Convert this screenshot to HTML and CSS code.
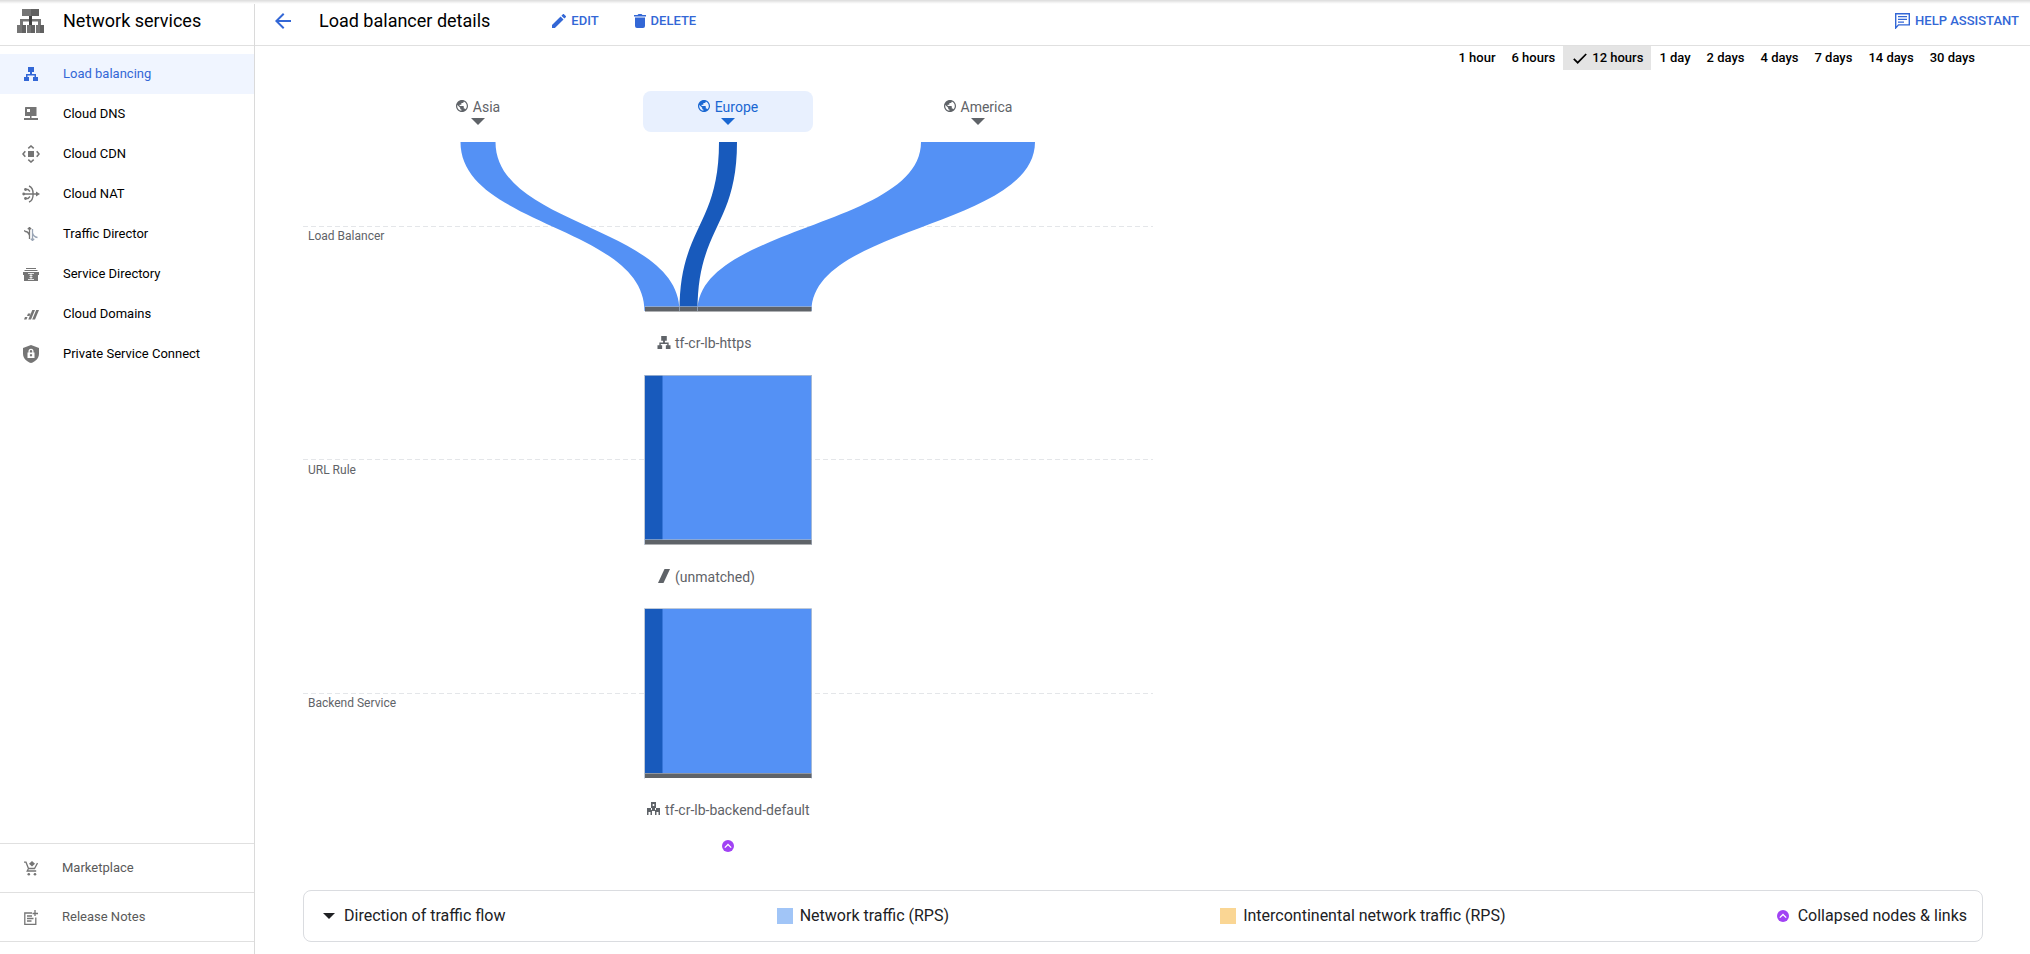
FILE: index.html
```
<!DOCTYPE html>
<html lang="en">
<head>
<meta charset="utf-8">
<title>Load balancer details</title>
<link rel="stylesheet" href="styles.css">
</head>
<body>
<svg class="defs" aria-hidden="true">
  <symbol id="i-lb" viewBox="0 0 14 14"><path d="M4 0h6v5H8v2h4v3h2v4H9v-4h1.500V8.500h-7V10H5v4H0v-4h2V7h4V5H4z"/></symbol>
  <symbol id="i-globe" viewBox="2 2 20 20"><path d="M12 2C6.480 2 2 6.480 2 12s4.480 10 10 10 10-4.480 10-10S17.520 2 12 2zm-1 17.930c-3.950-.49-7-3.850-7-7.930 0-.62.080-1.210.21-1.790L9 15v1c0 1.100.9 2 2 2v1.930zm6.900-2.540c-.26-.81-1-1.390-1.900-1.390h-1v-3c0-.55-.45-1-1-1H8v-2h2c.55 0 1-.45 1-1V7h2c1.100 0 2-.9 2-2v-.41c2.930 1.190 5 4.060 5 7.410 0 2.080-.8 3.970-2.100 5.390z"/></symbol>
  <symbol id="i-collapsed" viewBox="0 0 12 12"><circle cx="6" cy="6" r="6" fill="#a142f4"/><path d="M2.800 7.600 6 4.500l3.200 3.100" fill="none" stroke="#fff" stroke-width="1.300"/></symbol>
</svg>
<div class="app">
  <aside class="side">
    <div class="side-head">
      <svg width="27" height="24" viewBox="0 0 27 24"><path fill="#757575" d="M5 0h9v7H5zM3 10h21v2.500H3zM3 12h3v4H3zM21 12h3v4h-3zM0 16h5v8H0zM10 16h4v8h-4zM19 16h4v8h-4z"/><path fill="#616161" d="M14 0h8v7h-8zM5 16h4v8H5zM14 16h4v8h-4zM23 16h4v8h-4z"/><path fill="#424242" d="M12 7h3v9h-3z"/></svg>
      <span class="side-title">Network services</span>
    </div>
    <nav class="nav">
      <a href="#" class="nav-item current"><span class="ico"><svg width="14" height="14"><use href="#i-lb"/></svg></span>Load balancing</a>
      <a href="#" class="nav-item"><span class="ico"><svg width="14" height="14" viewBox="0 0 14 14"><path fill-rule="evenodd" d="M1.500 0h11v9h-5v2H14v2H0v-2h6V9H1V.5zM3 2v3h3V2z"/></svg></span>Cloud DNS</a>
      <a href="#" class="nav-item"><span class="ico"><svg width="18" height="18" viewBox="0 0 18 18"><path d="M6 6h6v6H6z"/><path d="M6.300 3.300 9 1l2.700 2.300M6.300 14.700 9 17l2.700-2.300M3.300 6.300 1 9l2.300 2.700M14.700 6.300 17 9l-2.300 2.700" fill="none" stroke="currentColor" stroke-width="1.600"/></svg></span>Cloud CDN</a>
      <a href="#" class="nav-item"><span class="ico"><svg width="18" height="18" viewBox="0 0 18 18"><path d="M7 1c5.500 2 5.500 14 0 16M1 9h15M3 4.500h3l2 2M3 13.500h3l2-2" fill="none" stroke="currentColor" stroke-width="1.400"/><circle cx="3.500" cy="4.500" r="1.400"/><circle cx="1.700" cy="9" r="1.400"/><circle cx="3.500" cy="13.500" r="1.400"/><path d="m14 6.500 4 2.500-4 2.500z"/></svg></span>Cloud NAT</a>
      <a href="#" class="nav-item"><span class="ico"><svg class="line" width="14" height="14" viewBox="0 0 14 14"><path d="M5.500 12V1M3.800 2.200 5.500.5l1.700 1.700M0 3.500l1.500 1c2 0 3 1 4 4" stroke="#757575"/><path d="M8.500 2v11M6.800 11.800l1.700 1.700 1.700-1.700M8.500 6c.7 3 2 4 5 4.500" stroke="#9aa5b5"/></svg></span>Traffic Director</a>
      <a href="#" class="nav-item"><span class="ico"><svg width="16" height="13" viewBox="0 0 16 13"><path d="M3 0h10v1H3zM1.500 2h13v1H1.500zM0 4h16v3h-1v6H1V7H0z"/><path d="M5 5.500h6M6.500 7.500h3M8 5v6M6.500 9.500h3M5 11.500h6" stroke="#fff" stroke-width=".8"/></svg></span>Service Directory</a>
      <a href="#" class="nav-item"><span class="ico"><svg width="15" height="11" viewBox="0 0 15 11"><path d="M8.300 1H11L7 10.500H4.300zM12.200 1H15l-4 9.500H8.200zM4 4.500h2.500l-1 2.500H3zM1 8h2.500l-1 2.500H0z"/></svg></span>Cloud Domains</a>
      <a href="#" class="nav-item"><span class="ico"><svg width="16" height="18" viewBox="0 0 16 18"><path d="m8 0 8 3v5.500c0 4.500-3.300 8.200-8 9.500-4.700-1.300-8-5-8-9.500V3z"/><path fill="#fff" fill-rule="evenodd" d="M4.500 7.500h1V6.200a2.500 2.500 0 0 1 5 0v1.300h1V13h-7zm2.300 0h2.400V6.200a1.200 1.200 0 0 0-2.400 0zM8 9a1.200 1.200 0 1 0 .01 0z"/></svg></span>Private Service Connect</a>
    </nav>
    <div class="side-foot">
      <a href="#" class="foot-item"><span class="ico"><svg width="14" height="15" viewBox="0 0 14 15"><path d="M0 1.200h2l2.500 6.300h6L13.500 2M4.500 7.500 3.200 10h9" fill="none" stroke="currentColor" stroke-width="1.300"/><path d="M8 0l3 2.700L8 5.500 5 2.700z"/><circle cx="4.800" cy="13.200" r="1.300"/><circle cx="11" cy="13.200" r="1.300"/></svg></span>Marketplace</a>
      <a href="#" class="foot-item"><span class="ico"><svg class="line" width="14" height="15" viewBox="0 0 14 15" stroke="currentColor"><path d="M8 3H.8v11.300h11V7.500M3 6h5M3 8.500h6.500M3 11h4.500M11 0v6M8.500 3.500H14"/></svg></span>Release Notes</a>
      <div class="foot-end"></div>
    </div>
  </aside>
  <main class="main">
    <header class="bar">
      <button class="back" aria-label="Back"><svg width="16" height="16" viewBox="4 4 16 16"><path d="M20 11H7.830l5.590-5.590L12 4l-8 8 8 8 1.410-1.410L7.830 13H20v-2z"/></svg></button>
      <h1>Load balancer details</h1>
      <button class="act"><svg width="14" height="14" viewBox="3 3 18 18"><path d="M3 17.250V21h3.750L17.810 9.940l-3.750-3.750L3 17.250zM20.710 7.040c.39-.39.39-1.020 0-1.410l-2.340-2.340c-.39-.39-1.020-.39-1.410 0l-1.830 1.830 3.750 3.750 1.830-1.830z"/></svg>EDIT</button>
      <button class="act del"><svg width="12" height="14" viewBox="0 0 12 14"><path d="M1 3.500h10V12q0 2-2 2H3q-2 0-2-2zM0 1h3.500l1-1h3l1 1H12v1.500H0z"/></svg>DELETE</button>
      <button class="act help"><svg width="15" height="16" viewBox="0 0 15 16"><path d="M.7 15V.7h13.600v11.200H3.500z" fill="none" stroke="currentColor" stroke-width="1.400"/><path d="M3 3h9v1.300H3zM3 5.700h9V7H3zM3 8.400h6v1.300H3z"/></svg>HELP ASSISTANT</button>
    </header>
    <div class="ranges">
      <button>1 hour</button><button>6 hours</button><button class="on"><svg width="14" height="11" viewBox="0 0 14 11"><path d="m.8 5.800 3.900 3.900L13.200 1" fill="none" stroke="currentColor" stroke-width="1.700"/></svg>12 hours</button><button>1 day</button><button>2 days</button><button>4 days</button><button>7 days</button><button>14 days</button><button>30 days</button>
    </div>
    <section class="flow">
      <svg class="sankey" width="850" height="820" viewBox="303 70 850 820">
        <path class="guide" d="M303 226.500h850M303 459.500h850M303 693.500h850"/>
        <g class="link">
          <path d="M460.500 142C460.500 226.500 644.500 226.500 644.500 311H679.500C679.500 226.500 495.500 226.500 495.500 142z"/>
          <path d="M921 142C921 226.500 697.500 226.500 697.500 311H811.500C811.500 226.500 1035 226.500 1035 142z"/>
          <path d="M645 375.500h166.500V540H645zM645 609h166.500v164H645z"/>
        </g>
        <g class="link-on">
          <path d="M719 142C719 226.500 679.500 226.500 679.500 311H697.500C697.500 226.500 737 226.500 737 142z"/>
          <path d="M645 375.500h17.500V540H645zM645 609h17.500v164H645z"/>
        </g>
        <path class="edge" d="M644.500 306.500h167M644.500 539.500h167M644.500 773.500h167M644.500 375v170M811.500 375v170M644.500 608.500v170M811.500 608.500v170M644.500 375.500h167M644.500 608.500h167"/>
        <path class="node" d="M645 307h166.500v4.500H645zM645 540h166.500v4.500H645zM645 773.500h166.500v4.500H645z"/>
        <path class="edge" d="M679.500 307v4M697.500 307v4"/>
        <g class="tier"><text x="308" y="240">Load Balancer</text><text x="308" y="474">URL Rule</text><text x="308" y="707">Backend Service</text></g>
        <g class="label">
          <use href="#i-lb" x="657" y="336" width="14" height="13"/><text x="675" y="348">tf-cr-lb-https</text>
          <path d="M664.500 569h5.500l-6.500 14H658z"/><text x="675" y="582">(unmatched)</text>
          <path fill-rule="evenodd" d="M651 802h5v6h-1v2h1v-2h4v7h-1.500v-3h-2v3H655v-4h-3v4h-1.500v-3h-2v3H647v-7h4v2h1v-2h-1zM652.700 804v2h1.600v-2z"/><text x="665" y="815">tf-cr-lb-backend-default</text>
        </g>
        <use href="#i-collapsed" x="722" y="840" width="12" height="12"/>
      </svg>
      <button class="region asia"><span><svg width="12" height="12"><use href="#i-globe"/></svg>Asia</span><i></i></button>
      <button class="region europe"><span><svg width="12" height="12"><use href="#i-globe"/></svg>Europe</span><i></i></button>
      <button class="region america"><span><svg width="12" height="12"><use href="#i-globe"/></svg>America</span><i></i></button>
    </section>
    <div class="legend">
      <span><i class="tri"></i>Direction of traffic flow</span>
      <span><i class="sw blue"></i>Network traffic (RPS)</span>
      <span><i class="sw amber"></i>Intercontinental network traffic (RPS)</span>
      <span class="nodes"><svg width="12" height="12"><use href="#i-collapsed"/></svg>Collapsed nodes &amp; links</span>
    </div>
  </main>
</div>
</body>
</html>
```
FILE: styles.css
```
* { box-sizing: border-box; }
body { margin: 0; font: 13px/20px Roboto, "Liberation Sans", sans-serif; color: #000; background: #fff; }
button { font: inherit; color: inherit; background: none; border: 0; padding: 0; margin: 0; cursor: pointer; }
a { color: inherit; text-decoration: none; }
svg { display: block; flex: none; fill: currentColor; }
.line { fill: none; stroke-width: 1.3; }
.defs { position: absolute; width: 0; height: 0; }
.app { display: flex; min-height: 100vh; }
.app::before { content: ""; position: absolute; top: 0; left: 0; right: 0; height: 4px; background: linear-gradient(#dcdcdc, #e4e4e4 25%, #f8f8f8 75%, #fff); }

.side { flex: none; width: 255px; border-right: 1px solid #dadada; display: flex; flex-direction: column; }
.side-head { height: 46px; border-bottom: 1px solid #e0e0e0; display: flex; align-items: center; gap: 19px; padding: 0 0 3px 17px; }
.side-title { font-size: 18px; line-height: 24px; }
.nav { padding-top: 8px; }
.nav-item { display: flex; align-items: center; height: 40px; }
.ico { width: 62px; display: flex; justify-content: center; color: #757575; }
.nav-item .ico { margin-right: 1px; }
.current { background: #f0f5ff; color: #3367d6; }
.current .ico { color: #3367d6; }
.side-foot { margin-top: auto; color: #5a5a5a; }
.foot-item { display: flex; align-items: center; height: 49px; border-top: 1px solid #e0e0e0; }
.foot-end { height: 13px; border-top: 1px solid #e0e0e0; }

.main { flex: 1; min-width: 0; display: flex; flex-direction: column; }
.bar { height: 46px; border-bottom: 1px solid #e0e0e0; display: flex; align-items: center; padding: 0 11px 3px 20px; color: #3367d6; }
h1 { margin: 0 62px 0 28px; font-size: 18px; line-height: 24px; font-weight: 400; color: #000; }
.act { display: flex; align-items: center; gap: 5px; font-weight: 500; }
.del { margin-left: 35px; }
.help { margin-left: auto; }
.ranges { display: flex; justify-content: flex-end; padding-right: 47px; }
.ranges button { height: 24px; padding: 0 8px; font-weight: 500; display: flex; align-items: center; gap: 5px; }
.ranges .on { background: #e4e4e4; padding-left: 10px; }

.flow { position: relative; margin-left: 48px; }
.sankey { overflow: visible; }
.guide { fill: none; stroke: #e4e6e9; stroke-dasharray: 5 3; }
.link { fill: #5491f5; }
.link-on { fill: #185abc; }
.node { fill: #5f6368; }
.edge { fill: none; stroke: #a3b2c8; stroke-opacity: .7; }
.tier { font-size: 12px; fill: #5f6368; }
.label { font-size: 14px; fill: #5f6368; }
.region { position: absolute; top: 21px; width: 170px; height: 41px; padding-top: 5px; border-radius: 8px; display: flex; flex-direction: column; align-items: center; color: #5f6368; font-size: 14px; }
.region span { display: flex; align-items: center; gap: 5px; line-height: 22px; }
.region svg { margin-bottom: 3px; }
.region i { border: 7px solid transparent; border-top: 7px solid; border-bottom: 0; }
.asia { left: 90px; }
.europe { left: 340px; background: #e8f0fe; color: #1967d2; }
.america { left: 590px; }

.legend { margin: 0 47px 12px 48px; height: 52px; border: 1px solid #dadce0; border-radius: 8px; padding: 0 15px 0 19px; display: flex; justify-content: space-between; align-items: center; font-size: 16px; color: #202124; }
.legend span { display: flex; align-items: center; gap: 7px; }
.legend .nodes { gap: 9px; }
.tri { border: 6px solid transparent; border-top: 6px solid; border-bottom: 0; margin-right: 2px; }
.sw { width: 16px; height: 16px; }
.blue { background: #a1c5f7; }
.amber { background: #fad694; }
```
